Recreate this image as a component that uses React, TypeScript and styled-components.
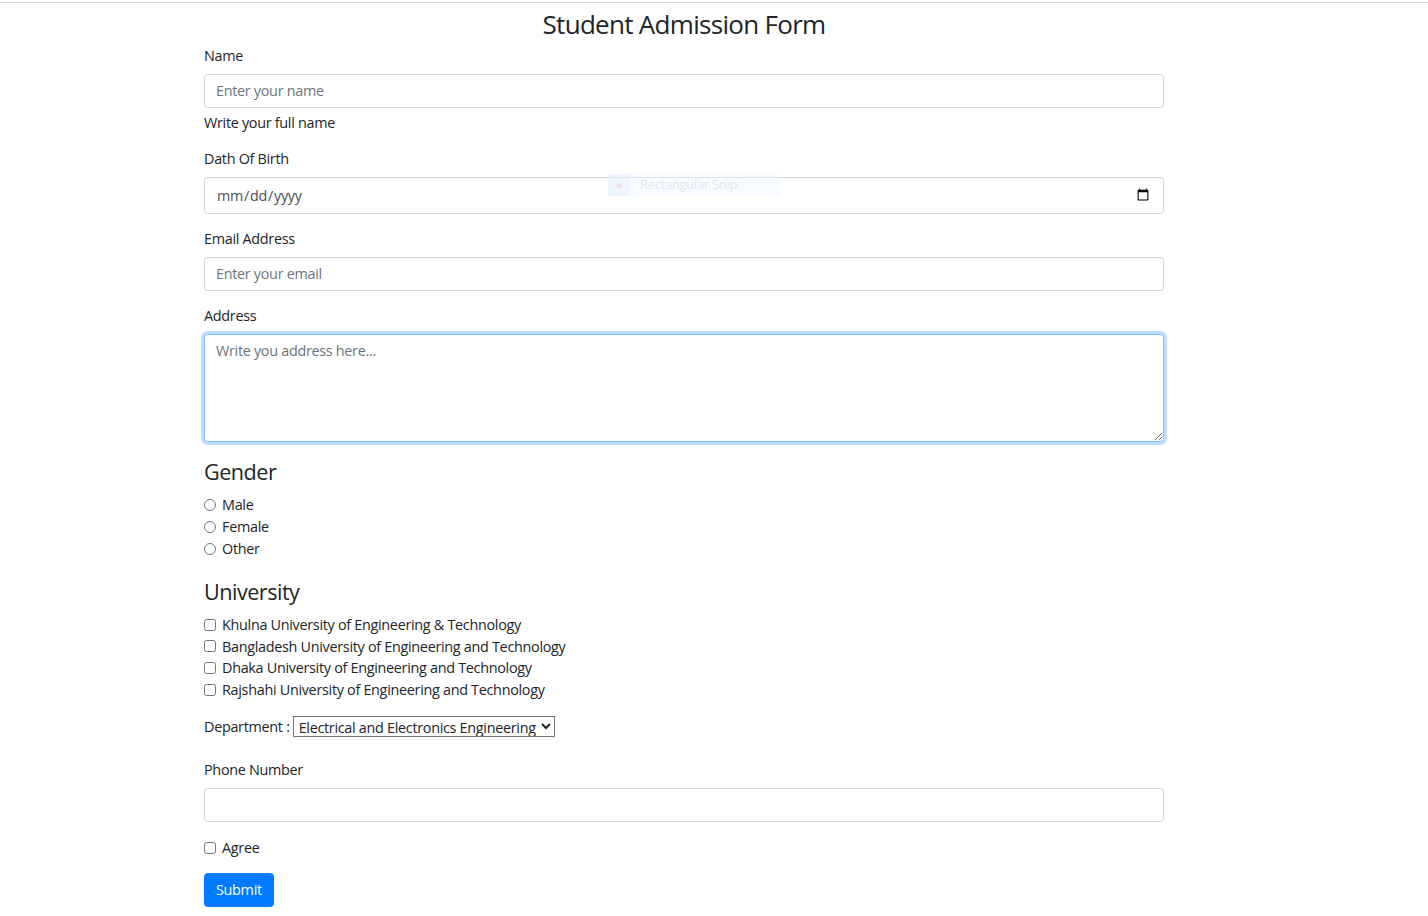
import React from "react";
import styled, { createGlobalStyle } from "styled-components";

const GlobalStyle = createGlobalStyle`
  html, body { margin: 0; padding: 0; background: #fff; }
  body {
    font-family: "Open Sans", "Noto Sans", sans-serif;
    font-size: 14.4px;
    line-height: 21.6px;
    letter-spacing: -0.3px;
    color: #212529;
  }
  * { box-sizing: border-box; }
`;

const TopRule = styled.div`
  height: 3px;
  border-bottom: 1px solid #d3d3d3;
`;

const Page = styled.div`
  position: relative;
  width: 960px;
  margin-left: 204px;
  padding-bottom: 9px;
`;

const Title = styled.h2`
  margin: 4px 0 4px;
  text-align: center;
  font-size: 26px;
  line-height: 34px;
  font-weight: 500;
  letter-spacing: -0.7px;
`;

const FormGroup = styled.div`
  margin-bottom: 14.4px;
`;

const Label = styled.label`
  display: block;
  margin-bottom: 7.2px;
`;

const TextInput = styled.input<{ $tall?: boolean }>`
  display: block;
  width: 100%;
  height: ${(p) => (p.$tall ? "37px" : "34px")};
  padding: 5px 11px;
  font-family: inherit;
  font-size: 14.4px;
  letter-spacing: -0.3px;
  color: #495057;
  background: #fff;
  border: 1px solid #ced4da;
  border-radius: 3.6px;
  outline: none;
  &::placeholder { color: #6c757d; opacity: 1; }
`;

const HelpText = styled.div`
  margin-top: 4px;
`;

const TextArea = styled.textarea`
  display: block;
  width: 100%;
  height: 108px;
  padding: 5px 11px;
  font-family: inherit;
  font-size: 14.4px;
  line-height: 21.6px;
  letter-spacing: -0.3px;
  color: #495057;
  border: 1px solid #80bdff;
  border-radius: 3.6px;
  box-shadow: 0 0 0 2.9px rgba(0, 123, 255, 0.25);
  outline: none;
  &::placeholder { color: #6c757d; opacity: 1; }
`;

const SectionTitle = styled.h4<{ $top: number }>`
  margin: ${(p) => p.$top}px 0 9px;
  font-size: 21.6px;
  line-height: 26px;
  font-weight: 500;
  letter-spacing: -0.5px;
`;

const CheckRow = styled.label`
  display: flex;
  align-items: center;
  height: 21.8px;
`;

const Check = styled.input`
  width: 12px;
  height: 12px;
  margin: 0 6px 0 0;
`;

const DeptRow = styled.div`
  display: flex;
  align-items: center;
  margin: 15px 0 21px;
  height: 22px;
`;

const DeptLabel = styled.label`
  margin-right: 3px;
`;

const Select = styled.select`
  height: 21px;
  font-family: inherit;
  font-size: 14.4px;
  letter-spacing: -0.3px;
  color: #212529;
  border: 1px solid #767676;
  border-radius: 0;
  background: #fff;
  padding: 0 1px;
`;

const AgreeRow = styled(CheckRow)`
  margin: 15px 0 14px;
`;

const SubmitButton = styled.button`
  display: inline-block;
  height: 34px;
  padding: 0 11px;
  font-family: inherit;
  font-size: 14.4px;
  letter-spacing: -0.3px;
  color: #fff;
  background: #007bff;
  border: 1px solid #007bff;
  border-radius: 3.6px;
`;

const SnipTip = styled.div`
  position: absolute;
  left: 404px;
  top: 167px;
  width: 173px;
  height: 22px;
  display: flex;
  align-items: center;
  background: rgba(235, 244, 255, 0.35);
  color: rgba(190, 205, 220, 0.45);
  font-size: 13px;
  pointer-events: none;
`;

const SnipIcon = styled.span`
  width: 22px;
  height: 22px;
  margin-right: 10px;
  display: flex;
  align-items: center;
  justify-content: center;
  background: rgba(225, 238, 255, 0.35);
  &::after {
    content: "";
    width: 5px;
    height: 5px;
    border-radius: 50%;
    background: rgba(240, 200, 190, 0.5);
  }
`;

const genders = ["Male", "Female", "Other"];
const universities = [
  "Khulna University of Engineering & Technology",
  "Bangladesh University of Engineering and Technology",
  "Dhaka University of Engineering and Technology",
  "Rajshahi University of Engineering and Technology",
];

export default function App() {
  return (
    <>
      <GlobalStyle />
      <TopRule />
      <Page>
        <Title>Student Admission Form</Title>
        <form onSubmit={(e) => e.preventDefault()}>
          <FormGroup>
            <Label htmlFor="name">Name</Label>
            <TextInput id="name" type="text" placeholder="Enter your name" />
            <HelpText>Write your full name</HelpText>
          </FormGroup>
          <FormGroup>
            <Label htmlFor="dob">Dath Of Birth</Label>
            <TextInput id="dob" type="date" $tall />
          </FormGroup>
          <FormGroup>
            <Label htmlFor="email">Email Address</Label>
            <TextInput id="email" type="email" placeholder="Enter your email" />
          </FormGroup>
          <FormGroup>
            <Label htmlFor="address">Address</Label>
            <TextArea id="address" placeholder="Write you address here..." autoFocus />
          </FormGroup>

          <SectionTitle $top={17.5}>Gender</SectionTitle>
          {genders.map((g) => (
            <CheckRow key={g}>
              <Check type="radio" name="gender" value={g} />
              {g}
            </CheckRow>
          ))}

          <SectionTitle $top={19}>University</SectionTitle>
          {universities.map((u) => (
            <CheckRow key={u}>
              <Check type="checkbox" value={u} />
              {u}
            </CheckRow>
          ))}

          <DeptRow>
            <DeptLabel htmlFor="dept">Department :</DeptLabel>
            <Select id="dept" defaultValue="eee">
              <option value="eee">Electrical and Electronics Engineering</option>
              <option value="cse">Computer Science and Engineering</option>
              <option value="me">Mechanical Engineering</option>
              <option value="ce">Civil Engineering</option>
            </Select>
          </DeptRow>

          <FormGroup>
            <Label htmlFor="phone">Phone Number</Label>
            <TextInput id="phone" type="tel" />
          </FormGroup>

          <AgreeRow>
            <Check type="checkbox" />
            Agree
          </AgreeRow>

          <SubmitButton type="submit">Submit</SubmitButton>
        </form>
        <SnipTip>
          <SnipIcon />
          Rectangular Snip
        </SnipTip>
      </Page>
    </>
  );
}
